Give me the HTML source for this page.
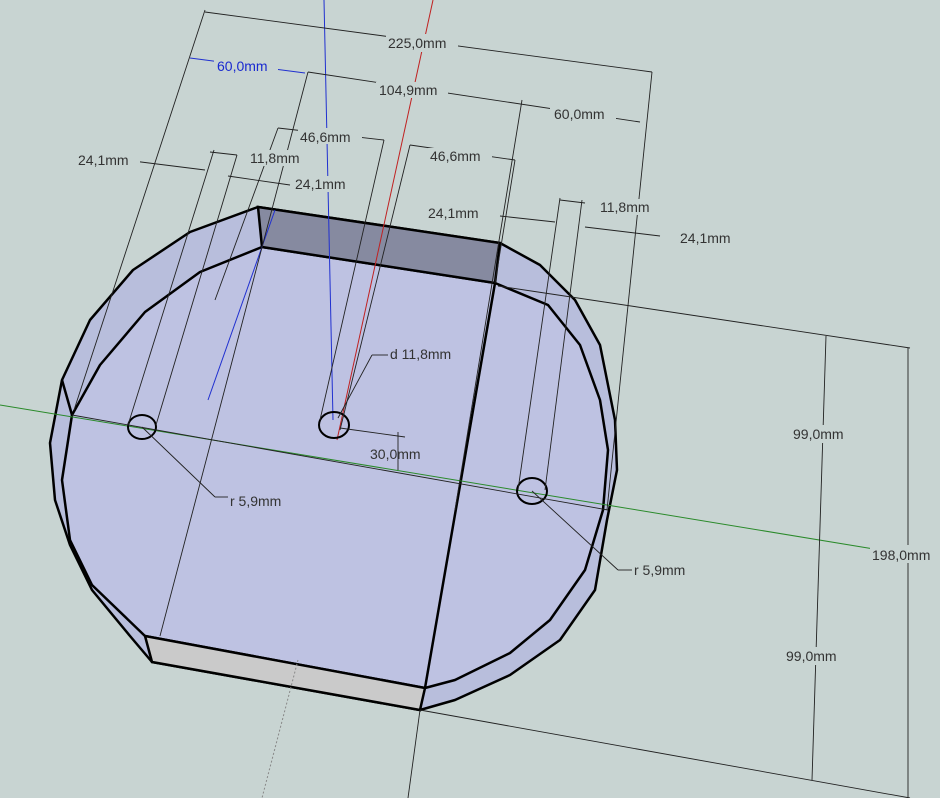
<!DOCTYPE html>
<html><head><meta charset="utf-8"><style>
html,body{margin:0;padding:0;background:#c8d4d2;}
svg{display:block}
text{font-family:"Liberation Sans",sans-serif;font-size:14px;fill:#333}
</style></head><body>
<svg width="940" height="798" viewBox="0 0 940 798" xmlns="http://www.w3.org/2000/svg">
<rect width="940" height="798" fill="#c8d4d2"/>
<!-- outer body -->
<polygon points="258,207 190,232 133,270 90,320 62,380 50,443 55,500 70,545 92,590 130,636 152,662 420,710 455,700 510,675 560,640 595,590 607,520 617,470 615,420 600,345 575,300 540,265 500,243" fill="#b8bedc" stroke="#000" stroke-width="2.5" stroke-linejoin="round"/>
<!-- top face -->
<polygon points="262,247 200,272 145,312 100,365 72,415 62,480 70,540 92,585 145,636 425,688 455,680 510,653 550,620 585,570 603,510 608,450 600,400 580,345 548,305 495,283" fill="#bec2e2" stroke="#000" stroke-width="2.5" stroke-linejoin="round"/>
<!-- gray back wall -->
<polygon points="258,207 500,243 495,283 262,247" fill="#868aa0" stroke="#000" stroke-width="2.5"/>
<!-- bottom strip -->
<polygon points="145,636 425,688 420,710 152,662" fill="#cacaca" stroke="#000" stroke-width="2.5"/>
<line x1="62" y1="380" x2="72" y2="415" stroke="#000" stroke-width="2.5"/>
<line x1="495" y1="283" x2="425" y2="688" stroke="#000" stroke-width="2.5"/>
<!-- axes -->
<line x1="0" y1="405" x2="880" y2="550" stroke="#2a8a2a" stroke-width="1"/>
<line x1="324" y1="0" x2="333" y2="420" stroke="#2030d0" stroke-width="1"/>
<line x1="275" y1="210" x2="208" y2="400" stroke="#2030d0" stroke-width="1"/>
<line x1="433" y1="0" x2="337" y2="440" stroke="#c02020" stroke-width="1"/>
<line x1="298" y1="660" x2="262" y2="798" stroke="#888" stroke-width="1" stroke-dasharray="2,2"/>
<!-- holes -->
<g fill="none" stroke="#000" stroke-width="2">
<ellipse cx="142" cy="427" rx="14" ry="12"/>
<ellipse cx="334" cy="425" rx="15" ry="13"/>
<ellipse cx="532" cy="491" rx="15" ry="13"/>
</g>
<!-- dimension / guide lines -->
<g stroke="#222" stroke-width="0.9" fill="none">
<line x1="72" y1="415" x2="608" y2="510"/>
<line x1="205" y1="10" x2="74" y2="410"/>
<line x1="652" y1="72" x2="607" y2="510"/>
<line x1="205" y1="12" x2="652" y2="72"/>
<line x1="308" y1="72" x2="160" y2="636"/>
<line x1="308" y1="72" x2="640" y2="122"/>
<line x1="522" y1="100" x2="455" y2="510"/>
<line x1="214" y1="150" x2="128" y2="425"/>
<line x1="237" y1="155" x2="156" y2="425"/>
<line x1="278" y1="128" x2="215" y2="300"/>
<line x1="384" y1="140" x2="320" y2="420"/>
<line x1="410" y1="145" x2="340" y2="430"/>
<line x1="515" y1="160" x2="495" y2="283"/>
<line x1="560" y1="198" x2="518" y2="490"/>
<line x1="582" y1="200" x2="545" y2="490"/>
<line x1="125" y1="160" x2="205" y2="170"/>
<line x1="228" y1="176" x2="290" y2="185"/>
<line x1="278" y1="128" x2="384" y2="140"/>
<line x1="410" y1="145" x2="515" y2="160"/>
<line x1="210" y1="152" x2="237" y2="155"/>
<line x1="500" y1="216" x2="555" y2="222"/>
<line x1="560" y1="200" x2="585" y2="203"/>
<line x1="585" y1="227" x2="660" y2="236"/>
<line x1="498" y1="286" x2="910" y2="348"/>
<line x1="420" y1="710" x2="910" y2="798"/>
<line x1="826" y1="336" x2="812" y2="780"/>
<line x1="908" y1="348" x2="908" y2="798"/>
<line x1="340" y1="428" x2="405" y2="437"/>
<line x1="398" y1="432" x2="398" y2="470"/>
<line x1="142" y1="427" x2="215" y2="497"/>
<line x1="215" y1="497" x2="228" y2="497"/>
<line x1="532" y1="491" x2="618" y2="570"/>
<line x1="618" y1="570" x2="632" y2="570"/>
<line x1="338" y1="418" x2="372" y2="355"/>
<line x1="372" y1="355" x2="388" y2="355"/>
<line x1="420" y1="710" x2="408" y2="798"/>
</g>
<line x1="190" y1="58" x2="305" y2="73" stroke="#2030d0" stroke-width="1"/>
<!-- labels -->
<g>
<rect x="386" y="34" width="72" height="18" fill="#c8d4d2"/><text x="388" y="48">225,0mm</text>
<rect x="214" y="58" width="64" height="16" fill="#c8d4d2"/><text x="217" y="71" style="fill:#1a2ad0">60,0mm</text>
<rect x="376" y="82" width="72" height="16" fill="#c8d4d2"/><text x="379" y="95">104,9mm</text>
<rect x="550" y="105" width="66" height="16" fill="#c8d4d2"/><text x="554" y="119">60,0mm</text>
<rect x="298" y="128" width="64" height="16" fill="#c8d4d2"/><text x="300" y="142">46,6mm</text>
<rect x="428" y="148" width="64" height="16" fill="#c8d4d2"/><text x="430" y="161">46,6mm</text>
<rect x="76" y="152" width="64" height="16" fill="#c8d4d2"/><text x="78" y="165">24,1mm</text>
<rect x="248" y="150" width="64" height="16" fill="#c8d4d2"/><text x="250" y="163">11,8mm</text>
<rect x="293" y="176" width="64" height="16" fill="#c8d4d2"/><text x="295" y="189">24,1mm</text>
<rect x="426" y="205" width="64" height="16" fill="#c8d4d2"/><text x="428" y="218">24,1mm</text>
<rect x="598" y="199" width="64" height="16" fill="#c8d4d2"/><text x="600" y="212">11,8mm</text>
<rect x="678" y="229" width="64" height="16" fill="#c8d4d2"/><text x="680" y="243">24,1mm</text>
<text x="390" y="359">d 11,8mm</text>
<text x="370" y="459">30,0mm</text>
<text x="230" y="506">r 5,9mm</text>
<text x="634" y="575">r 5,9mm</text>
<rect x="790" y="425" width="66" height="18" fill="#c8d4d2"/><text x="793" y="439">99,0mm</text>
<rect x="784" y="647" width="66" height="18" fill="#c8d4d2"/><text x="786" y="661">99,0mm</text>
<rect x="870" y="545" width="70" height="18" fill="#c8d4d2"/><text x="872" y="560">198,0mm</text>
</g>
</svg>
</body></html>
